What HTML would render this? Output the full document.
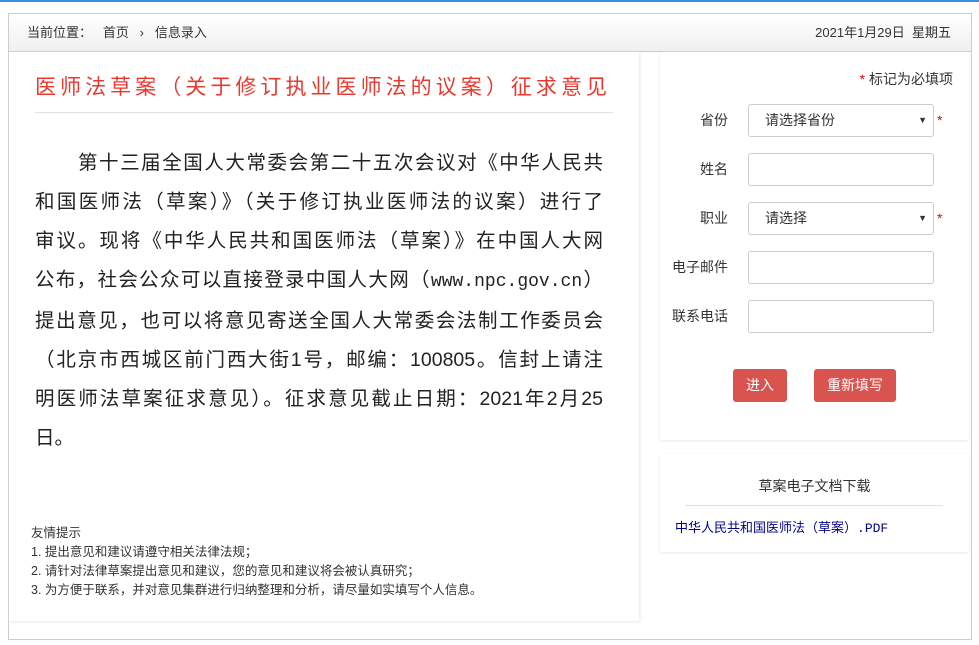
<!DOCTYPE html>
<html><head><meta charset="utf-8"><style>
*{box-sizing:border-box;margin:0;padding:0}
body{width:979px;height:645px;background:#fff;font-family:"Liberation Sans","Noto Sans CJK SC",sans-serif;color:#333;position:relative;overflow:hidden;border-top:2px solid #3a8ee6}
.wrap{position:absolute;left:8px;top:11px;width:964px;height:627px;border:1px solid #ccc}
.hd{height:38px;background:linear-gradient(#fff,#f0f0f0);border-bottom:1px solid #ccc;font-size:13px;line-height:37px;padding:0 0 0 18px;color:#333}
.hd .r{position:absolute;right:20px;top:0}
.left{position:absolute;left:0;top:38px;width:630px;height:569px;box-shadow:1px 1px 3px #e6e6e6}
.title{position:absolute;left:26px;top:19px;width:578px;font-size:21px;color:#e8392f;text-align:justify;text-align-last:justify;padding-right:6px}
.hr{position:absolute;left:26px;top:60px;width:578px;border-top:1px solid #e0e0e0}
.body{position:absolute;left:26px;top:92px;width:568px;font-size:19.5px;line-height:39px;color:#222}
.body div{text-align:justify;text-align-last:justify;white-space:nowrap}
.body div.l{text-align-last:left}
.tips{position:absolute;left:22px;top:472px;font-size:12.5px;line-height:19px;color:#333}
.card{position:absolute;left:651px;width:309px;background:#fff;box-shadow:0 1px 3px #e8e8e8;border-radius:3px}
.lbl{position:absolute;width:80px;text-align:right;font-size:14px;color:#333}
.inp{position:absolute;left:88px;width:186px;height:33px;border:1px solid #ccc;border-radius:3px;font-size:14px;line-height:31px;padding-left:16px}
.arr{position:absolute;right:6px;font-size:9px;color:#333}
.star{position:absolute;left:277px;color:#e00;font-size:14px}
.btn{position:absolute;top:316px;height:33px;background:#d9534f;color:#fff;border-radius:3px;font-size:14px;line-height:33px;text-align:center}
</style></head><body>
<div class="wrap">
<div class="hd">当前位置：&nbsp;&nbsp; 首页 &nbsp;&nbsp;›&nbsp;&nbsp; 信息录入<span class="r">2021年1月29日&nbsp; 星期五</span></div>
<div class="left">
<div class="title">医师法草案（关于修订执业医师法的议案）征求意见</div>
<div class="hr"></div>
<div class="body">
<div style="padding-left:43px">第十三届全国人大常委会第二十五次会议对《中华人民共</div>
<div>和国医师法（草案）》（关于修订执业医师法的议案）进行了</div>
<div>审议。现将《中华人民共和国医师法（草案）》在中国人大网</div>
<div>公布，社会公众可以直接登录中国人大网（<span style="font-family:'Liberation Mono',monospace;font-size:18px">www.npc.gov.cn</span>）</div>
<div>提出意见，也可以将意见寄送全国人大常委会法制工作委员会</div>
<div>（北京市西城区前门西大街1号，邮编：100805。信封上请注</div>
<div>明医师法草案征求意见）。征求意见截止日期：2021年2月25</div>
<div class="l">日。</div>
</div>
<div class="tips">友情提示<br>1. 提出意见和建议请遵守相关法律法规；<br>2. 请针对法律草案提出意见和建议，您的意见和建议将会被认真研究；<br>3. 为方便于联系，并对意见集群进行归纳整理和分析，请尽量如实填写个人信息。</div>
</div>
<div class="card" style="top:38px;height:388px">
<div style="position:absolute;right:16px;top:17px;font-size:14px"><span style="color:#e00">*</span> 标记为必填项</div>
<div class="lbl" style="left:-12px;top:58px">省份</div>
<div class="inp" style="top:52px;left:88px">请选择省份<span class="arr" style="top:0">▼</span></div><span class="star" style="top:60px">*</span>
<div class="lbl" style="left:-12px;top:107px">姓名</div>
<div class="inp" style="top:101px"></div>
<div class="lbl" style="left:-12px;top:156px">职业</div>
<div class="inp" style="top:150px">请选择<span class="arr" style="top:0">▼</span></div><span class="star" style="top:158px">*</span>
<div class="lbl" style="left:-12px;top:205px">电子邮件</div>
<div class="inp" style="top:199px"></div>
<div class="lbl" style="left:-12px;top:254px">联系电话</div>
<div class="inp" style="top:248px"></div>
<div class="btn" style="left:73px;width:54px;top:317px">进入</div>
<div class="btn" style="left:154px;width:82px;top:317px">重新填写</div>
</div>
<div class="card" style="top:440px;height:98px">
<div style="position:absolute;left:0;width:100%;top:22px;text-align:center;font-size:14px">草案电子文档下载</div>
<div style="position:absolute;left:25px;width:258px;top:51px;border-top:1px solid #e0e0e0"></div>
<div style="position:absolute;left:15px;top:63px;font-size:13px;color:#00008b">中华人民共和国医师法（草案）<span style="font-family:'Liberation Mono',monospace">.PDF</span></div>
</div>
</div>
</body></html>
